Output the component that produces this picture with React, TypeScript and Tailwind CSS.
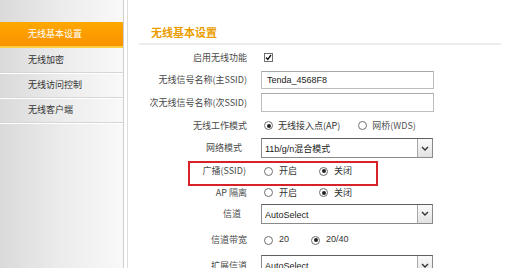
import React from "react";

const font = { fontFamily: '"Noto Sans CJK SC", "Liberation Sans", sans-serif' };

function Radio({ checked }: { checked?: boolean }) {
  return (
    <span className="inline-flex w-[9px] h-[9px] rounded-full border border-[#6f6f6f] bg-white items-center justify-center">
      {checked && <span className="w-[4px] h-[4px] rounded-full bg-[#222]" />}
    </span>
  );
}

function Select({ value, cls }: { value: string; cls?: string }) {
  return (
    <div className={`flex w-[172px] h-[20px] border border-[#8a8a8a] border-t-[#5f5f5f] bg-white ${cls ?? ""}`}>
      <span className="flex-1 pl-[3px] pt-[4px] text-[9px] leading-[12px] text-[#222]" style={{ fontFamily: '"Liberation Sans", "Noto Sans CJK SC", sans-serif' }}>
        {value}
      </span>
      <span className="w-[15px] border-l border-[#a8a8a8] bg-gradient-to-b from-[#fafafa] to-[#e2e2e2] flex items-center justify-center">
        <svg width="8" height="5" viewBox="0 0 8 5">
          <path d="M1 1 L4 4 L7 1" fill="none" stroke="#333" strokeWidth="1.4" />
        </svg>
      </span>
    </div>
  );
}

function Row({ label, h, pr = 0, children }: { label: string; h: number; pr?: number; children?: React.ReactNode }) {
  return (
    <div className="flex items-center" style={{ height: h }}>
      <div className="w-[120px] text-right text-[9px] text-[#4a4a4a] whitespace-nowrap" style={{ paddingRight: pr }}>
        {label}
      </div>
      <div className="ml-[14px] flex items-center">{children}</div>
    </div>
  );
}

export default function App() {
  const menu = ["无线加密", "无线访问控制", "无线客户端"];
  return (
    <div className="w-[523px] h-[268px] overflow-hidden bg-white flex relative" style={font}>
      {/* sidebar */}
      <aside className="w-[124px] h-full bg-gradient-to-r from-[#dadada] via-[#ececec] to-[#f9f9f9] border-r border-[#cfcfcf] pt-[22px] shrink-0">
        <div className="h-[26px] bg-gradient-to-b from-[#ffa800] to-[#f99200] border-b-2 border-[#ffcf40] pl-[28px] flex items-center text-[9px] text-white">
          无线基本设置
        </div>
        {menu.map((m) => (
          <div key={m} className="h-[25px] border-b border-[#d6d6d6] shadow-[0_1px_0_#fff] pl-[28px] flex items-center text-[9px] text-[#333]">
            {m}
          </div>
        ))}
      </aside>
      <div className="w-[3px] shrink-0" />
      <div className="w-px h-full bg-[#dcdcdc] shrink-0" />

      {/* content */}
      <main className="flex-1">
        <div className="pt-[24px] ml-[11px] mr-[22px] h-[45px] border-b-2 border-[#ececec]">
          <h2 className="pl-[12px] text-[11px] font-bold text-[#eb9d00] leading-[16px]">无线基本设置</h2>
        </div>
        <div className="-ml-[1px] pt-[2px]">
          <Row label="启用无线功能" h={21}>
            <span className="ml-[3px] w-[9px] h-[9px] border border-[#6f6f6f] bg-white flex items-center justify-center">
              <svg width="7" height="7" viewBox="0 0 7 7">
                <path d="M1 3.5 L2.8 5.5 L6 1" fill="none" stroke="#111" strokeWidth="1.3" />
              </svg>
            </span>
          </Row>
          <Row label="无线信号名称(主SSID)" h={23}>
            <div className="w-[173px] h-[18px] border border-[#bdbdbd] border-t-[#a8a8a8] bg-white pl-[5px] text-[9px] leading-[16px] text-[#222]" style={{ fontFamily: '"Liberation Sans", sans-serif' }}>
              Tenda_4568F8
            </div>
          </Row>
          <Row label="次无线信号名称(次SSID)" h={23}>
            <div className="w-[173px] h-[19px] border border-[#bdbdbd] border-t-[#a8a8a8] bg-white" />
          </Row>
          <Row label="无线工作模式" h={23}>
            <span className="ml-[3px] flex items-center gap-[5px] text-[9px] text-[#333]">
              <Radio checked />
              无线接入点(AP)
            </span>
            <span className="ml-[18px] flex items-center gap-[5px] text-[9px] text-[#555]">
              <Radio />
              网桥(WDS)
            </span>
          </Row>
          <Row label="网络模式" h={22} pr={5}>
            <Select value="11b/g/n混合模式" cls="h-[19px]" />
          </Row>
          <Row label="广播(SSID)" h={24} pr={1}>
            <span className="ml-[3px] flex items-center gap-[6px] text-[9px] text-[#333]">
              <Radio />
              开启
            </span>
            <span className="ml-[22px] flex items-center gap-[6px] text-[9px] text-[#333]">
              <Radio checked />
              关闭
            </span>
          </Row>
          <Row label="AP 隔离" h={19} pr={-2}>
            <span className="ml-[3px] flex items-center gap-[6px] text-[9px] text-[#333]">
              <Radio />
              开启
            </span>
            <span className="ml-[22px] flex items-center gap-[6px] text-[9px] text-[#333]">
              <Radio checked />
              关闭
            </span>
          </Row>
          <Row label="信道" h={23} pr={6}>
            <Select value="AutoSelect" />
          </Row>
          <Row label="信道带宽" h={30} pr={-2}>
            <span className="ml-[3px] flex items-center gap-[6px] text-[9px] text-[#333]" style={{ fontFamily: '"Liberation Sans", sans-serif' }}>
              <Radio />
              20
            </span>
            <span className="ml-[22px] flex items-center gap-[6px] text-[9px] text-[#333]" style={{ fontFamily: '"Liberation Sans", sans-serif' }}>
              <Radio checked />
              20/40
            </span>
          </Row>
          <div className="flex items-start h-[22px]">
            <div className="w-[120px] pt-[4px] text-right text-[9px] text-[#4a4a4a]">扩展信道</div>
            <div className="ml-[14px]">
              <Select value="AutoSelect" />
            </div>
          </div>
        </div>
      </main>

      {/* annotation box */}
      <div className="absolute left-[188px] top-[161px] w-[190px] h-[25px] border-2 border-[#d8222a] pointer-events-none" />
    </div>
  );
}
